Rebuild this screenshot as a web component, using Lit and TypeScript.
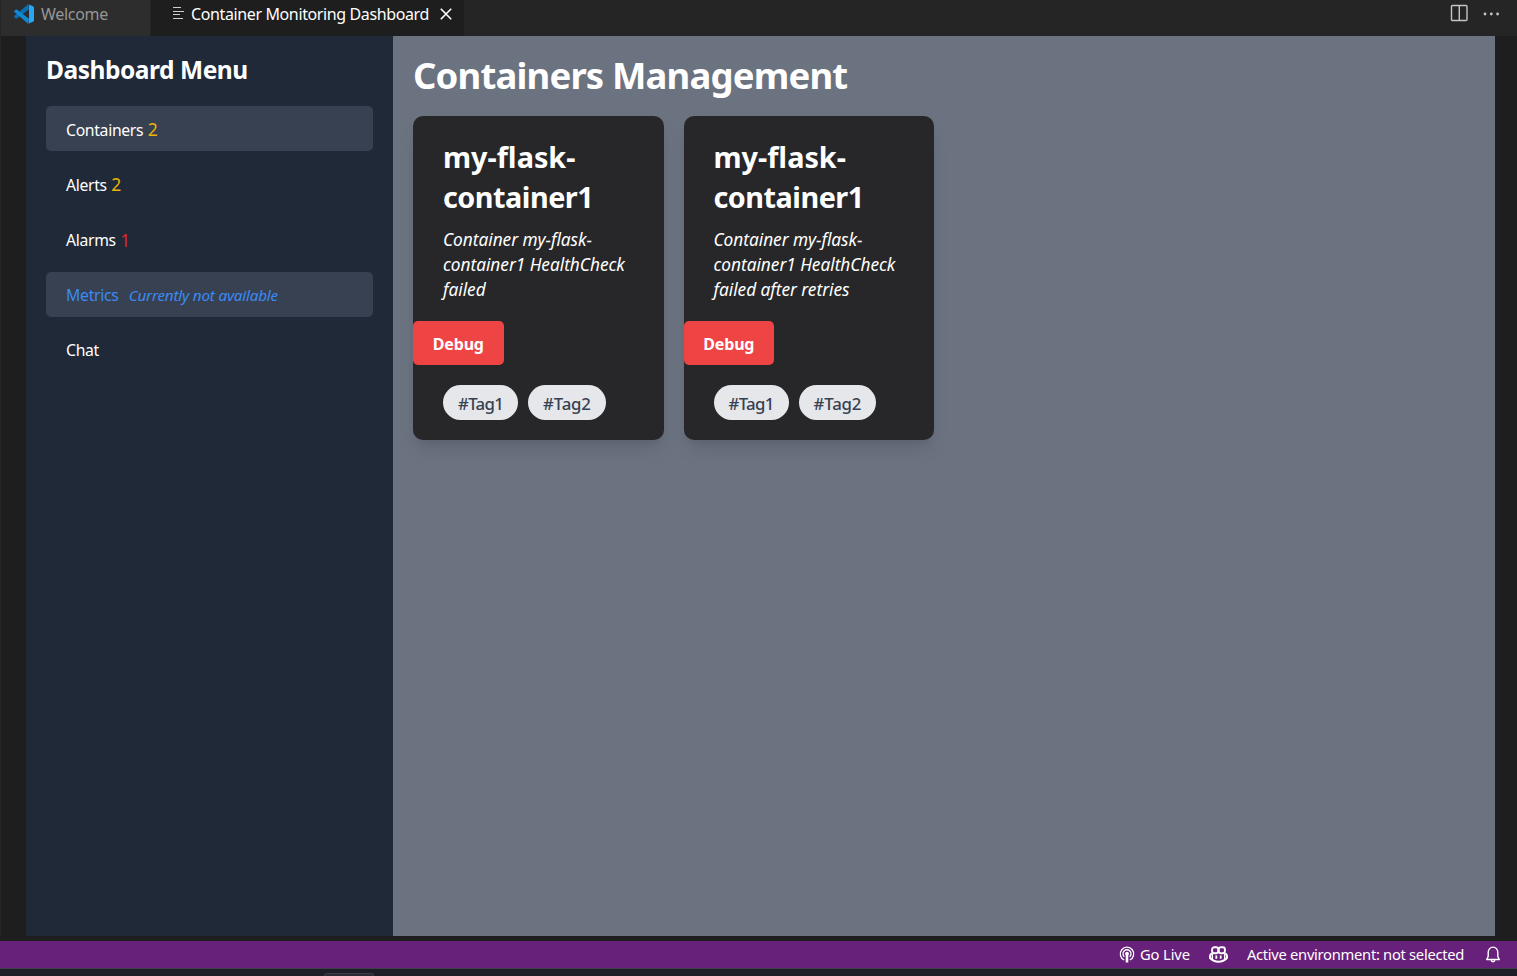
import { LitElement, html, css, nothing } from "lit";
import { customElement, property } from "lit/decorators.js";
import { classMap } from "lit/directives/class-map.js";

interface MenuItem {
  label: string;
  count?: number;
  tone?: "warn" | "alarm";
  note?: string;
  filled?: boolean;
}

interface ContainerInfo {
  prefix: string;
  name: string;
  message: string;
  tags: string[];
}

const MENU: MenuItem[] = [
  { label: "Containers", count: 2, tone: "warn", filled: true },
  { label: "Alerts", count: 2, tone: "warn" },
  { label: "Alarms", count: 1, tone: "alarm" },
  { label: "Metrics", note: "Currently not available", filled: true },
  { label: "Chat" },
];

const CONTAINERS: ContainerInfo[] = [
  { prefix: "my-flask-", name: "container1", message: "Container my-flask-container1 HealthCheck failed", tags: ["#Tag1", "#Tag2"] },
  { prefix: "my-flask-", name: "container1", message: "Container my-flask-container1 HealthCheck failed after retries", tags: ["#Tag1", "#Tag2"] },
];

@customElement("editor-tabs")
export class EditorTabs extends LitElement {
  static styles = css`
    :host { display: flex; height: 36px; background: #252526; padding-left: 1px; box-sizing: border-box; font-size: 16px; }
    .tab { display: flex; align-items: center; box-sizing: border-box; height: 36px; padding-bottom: 8px; white-space: nowrap; }
    .welcome { width: 149px; background: #2d2d2d; color: #969696; padding-left: 13px; gap: 7px; letter-spacing: -0.29px; margin-right: 1px; }
    .active { width: 313px; background: #1e1e1e; color: #fff; padding-left: 21px; letter-spacing: -0.38px; }
    .lines { margin: 0 7px 2px 0; }
    .close { margin-left: 10.5px; }
    .actions { margin-left: auto; display: flex; align-items: center; padding: 0 17px 10px 0; gap: 15px; }
    svg { display: block; flex: none; }
  `;
  render() {
    return html`
      <div class="tab welcome">
        <svg width="20" height="20" viewBox="0 0 100 100">
          <path fill="#0a6fb5" d="M71 1 L75 26 L16 71 Q12 74 8 71 L2 66 Q-1 63 2 60 Z"/>
          <path fill="#1287d2" d="M71 99 L75 74 L16 29 Q12 26 8 29 L2 34 Q-1 37 2 40 Z"/>
          <path fill="#2aa7f2" d="M71 99 Q68 100 66 96 Q75 99 75 92 V8 Q75 1 66 4 Q68 0 71 1 L95 11 Q100 14 100 19 V81 Q100 86 95 89 Z"/>
        </svg>
        <span>Welcome</span>
      </div>
      <div class="tab active">
        <svg class="lines" width="12" height="14" viewBox="0 0 12 14" stroke="#d0d0d0" stroke-width="1.2">
          <path d="M1 1.5H9M1 5.5H12M1 8.5H8M1 12.5H11"/>
        </svg>
        <span>Container Monitoring Dashboard</span>
        <svg class="close" width="14" height="14" viewBox="0 0 14 14" stroke="#fff" stroke-width="1.6">
          <path d="M1.8 1.8 12.2 12.2M12.2 1.8 1.8 12.2"/>
        </svg>
      </div>
      <div class="actions">
        <svg width="18" height="18" viewBox="0 0 18 18" fill="none" stroke="#c5c5c5" stroke-width="1.4">
          <rect x="1.5" y="1.5" width="15.5" height="15" rx="1"/><path d="M9.3 1.500V16.500"/>
        </svg>
        <svg width="17" height="18" viewBox="0 0 17 18" fill="#c5c5c5">
          <circle cx="2" cy="10" r="1.4"/><circle cx="8.3" cy="10" r="1.4"/><circle cx="14.6" cy="10" r="1.4"/>
        </svg>
      </div>
    `;
  }
}

@customElement("dashboard-menu")
export class DashboardMenu extends LitElement {
  static styles = css`
    :host { display: block; box-sizing: border-box; width: 367px; flex: none; background: #1f2937; padding: 16px 20px; color: #fff; }
    h2 { margin: 0 0 19px; font-size: 24.5px; line-height: 35px; font-weight: 700; letter-spacing: -0.46px; }
    ul { list-style: none; margin: 0; padding: 0; display: flex; flex-direction: column; gap: 10px; }
    li { box-sizing: border-box; height: 45.25px; padding: 2px 20px 0; border-radius: 5px; display: flex; align-items: center; font-size: 15.75px; letter-spacing: -0.32px; }
    li:last-child { padding-top: 0; }
    .filled { background: #374151; }
    .muted { color: #3b8af5; letter-spacing: -0.27px; }
    .count { margin: 0 0 2px 4.5px; font-size: 17.5px; line-height: 20px; }
    .warn { color: #eab308; }
    .alarm { color: #dc2626; margin-bottom: 0; }
    .note { margin-left: 10px; font-size: 15.25px; font-style: italic; letter-spacing: -0.2px; }
  `;
  render() {
    return html`
      <h2>Dashboard Menu</h2>
      <ul>
        ${MENU.map((item) => html`
          <li class=${classMap({ filled: !!item.filled, muted: !!item.note })}>
            <span>${item.label}</span>
            ${item.count ? html`<span class="count ${item.tone}">${item.count}</span>` : nothing}
            ${item.note ? html`<span class="note">${item.note}</span>` : nothing}
          </li>`)}
      </ul>
    `;
  }
}

@customElement("container-card")
export class ContainerCard extends LitElement {
  @property({ attribute: false }) info!: ContainerInfo;
  static styles = css`
    :host { display: block; box-sizing: border-box; height: 324px; background: #272729; border-radius: 10px; color: #fff;
      box-shadow: 0 12px 19px -4px rgba(0, 0, 0, 0.1), 0 5px 8px -5px rgba(0, 0, 0, 0.1); }
    .body { padding: 21px 30px 19px; }
    h3 { margin: 0 0 10px; font-size: 28.8px; line-height: 40px; font-weight: 700; letter-spacing: -0.5px; }
    .prefix { letter-spacing: 0; }
    p { margin: 0; height: 75px; font-size: 17.3px; line-height: 25px; font-style: italic; letter-spacing: -0.04px; }
    button { display: block; box-sizing: border-box; width: 90.6px; height: 44px; margin: 0; padding: 2px 0 0; border: 0; border-radius: 5px;
      background: #ef4444; color: #fff; font: inherit; font-size: 16px; font-weight: 700; letter-spacing: -0.17px; }
    .tags { display: flex; gap: 10px; padding: 20px 30px; }
    .tag { box-sizing: border-box; height: 35px; padding: 1px 15px 0; border-radius: 18px; background: #e5e7eb; color: #374151;
      font-size: 16.8px; line-height: 35px; font-weight: 500; letter-spacing: -0.15px; }
    .tag:first-child { letter-spacing: -0.7px; }
  `;
  render() {
    return html`
      <div class="body"><h3><span class="prefix">${this.info.prefix}</span>${this.info.name}</h3><p>${this.info.message}</p></div>
      <button>Debug</button>
      <div class="tags">${this.info.tags.map((t) => html`<span class="tag">${t}</span>`)}</div>
    `;
  }
}

@customElement("status-bar")
export class StatusBar extends LitElement {
  static styles = css`
    :host { display: flex; align-items: center; justify-content: flex-end; box-sizing: border-box; height: 28px; padding: 0 16px 1px 0;
      background: #68217a; border-bottom: 1px solid #3f3f46; color: #fff; font-size: 14.75px; white-space: nowrap; }
    .live { display: flex; align-items: center; gap: 5px; letter-spacing: -0.12px; }
    .copilot { margin: 0 19px; }
    .env { letter-spacing: -0.3px; margin-right: 21px; }
    svg { display: block; flex: none; }
  `;
  render() {
    return html`
      <div class="live">
        <svg width="16" height="17" viewBox="0 0 16 17" fill="none" stroke="#fff" stroke-width="1.3">
          <path d="M5.2 14A6.7 6.7 0 1 1 10.8 14"/><path d="M5.3 10.7A4 4 0 1 1 10.7 10.7"/>
          <circle cx="8" cy="7.6" r="1.9" fill="#fff" stroke="none"/><path d="M8 8V16.5" stroke-width="2.6"/>
        </svg>
        <span>Go Live</span>
      </div>
      <svg class="copilot" width="19" height="17" viewBox="0 0 19 17" fill="none" stroke="#fff" stroke-width="1.9">
        <rect x="3.1" y="1.2" width="6.2" height="6" rx="2.2"/><rect x="9.7" y="1.2" width="6.2" height="6" rx="2.2"/>
        <path d="M2.8 7.3Q1 8.3 1 10V12Q4.5 15.7 9.5 15.7T18 12V10Q18 8.3 16.2 7.3"/><path d="M3.3 7.5V13.5M15.7 7.5V13.5" stroke-width="1.5"/>
        <path d="M7.3 9.5V12.8M11.7 9.5V12.8" stroke-width="1.8"/>
      </svg>
      <span class="env">Active environment: not selected</span>
      <svg width="16" height="17" viewBox="0 0 16 17" fill="none" stroke="#fff" stroke-width="1.4" stroke-linejoin="round">
        <path d="M3.2 10.5V6.3A4.8 5.2 0 0 1 12.8 6.3V10.5L14.3 13.5H1.7Z"/><path d="M6.3 14A1.7 1.7 0 0 0 9.7 14" stroke-width="1.5"/>
      </svg>
    `;
  }
}

@customElement("app-root")
export class AppRoot extends LitElement {
  static styles = css`
    :host { display: flex; flex-direction: column; height: 976px; overflow: hidden; background: #1e1e1e; font-family: "Noto Sans", "Open Sans", sans-serif; }
    .panel { display: flex; height: 900px; margin: 0 22px 5px 0; padding-left: 25px; border-left: 1px solid #252526; }
    main { flex: 1; box-sizing: border-box; padding: 17px 20px; background: #6b7280; }
    h1 { margin: 0 0 18px; font-size: 36.5px; line-height: 45px; font-weight: 700; letter-spacing: -0.84px; color: #fff; }
    .grid { display: grid; grid-template-columns: repeat(4, 1fr); gap: 20px; }
    .desk { flex: 1; background: #1e1e28; display: flex; align-items: flex-end; }
    .hint { width: 50px; height: 3px; margin-left: 324px; box-sizing: border-box; border: 1px solid #3c3c46; border-bottom: 0; border-radius: 4px 4px 0 0; background: #2b2b34; }
  `;
  render() {
    return html`
      <editor-tabs></editor-tabs>
      <div class="panel">
        <dashboard-menu></dashboard-menu>
        <main>
          <h1>Containers Management</h1>
          <div class="grid">${CONTAINERS.map((c) => html`<container-card .info=${c}></container-card>`)}</div>
        </main>
      </div>
      <status-bar></status-bar>
      <div class="desk"><div class="hint"></div></div>
    `;
  }
}
